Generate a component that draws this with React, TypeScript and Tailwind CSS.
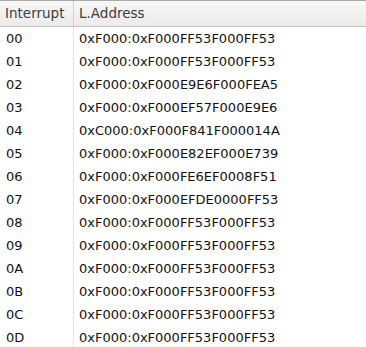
const rows: [string, string][] = [
  ['00', '0xF000:0xF000FF53F000FF53'],
  ['01', '0xF000:0xF000FF53F000FF53'],
  ['02', '0xF000:0xF000E9E6F000FEA5'],
  ['03', '0xF000:0xF000EF57F000E9E6'],
  ['04', '0xC000:0xF000F841F000014A'],
  ['05', '0xF000:0xF000E82EF000E739'],
  ['06', '0xF000:0xF000FE6EF0008F51'],
  ['07', '0xF000:0xF000EFDE0000FF53'],
  ['08', '0xF000:0xF000FF53F000FF53'],
  ['09', '0xF000:0xF000FF53F000FF53'],
  ['0A', '0xF000:0xF000FF53F000FF53'],
  ['0B', '0xF000:0xF000FF53F000FF53'],
  ['0C', '0xF000:0xF000FF53F000FF53'],
  ['0D', '0xF000:0xF000FF53F000FF53'],
];

export default function App() {
  return (
    <div className="w-[366px] h-[347px] overflow-hidden bg-white font-['DejaVu_Sans',sans-serif] text-[13px]">
      {/* Header */}
      <div className="flex h-[27px] border-t border-b border-t-[#a8a8a8] border-b-[#c4c4c4] bg-gradient-to-b from-[#f7f7f6] to-[#ecebea] text-[#3c3c3c] text-[13.5px]">
        <div className="w-[74px] border-r border-[#cfcfcf] pl-[5px] flex items-center">Interrupt</div>
        <div className="flex-1 pl-[5px] flex items-center">L.Address</div>
      </div>
      {/* Rows */}
      {rows.map(([k, v]) => (
        <div key={k} className="flex h-[23px] text-[#111]">
          <div className="w-[74px] border-r border-[#e2e2e2] pl-[6px] flex items-center">{k}</div>
          <div className="flex-1 pl-[5px] flex items-center">{v}</div>
        </div>
      ))}
    </div>
  );
}
